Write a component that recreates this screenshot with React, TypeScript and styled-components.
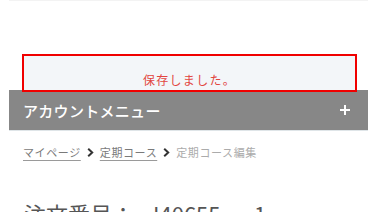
import React from "react";
import styled, { createGlobalStyle } from "styled-components";

const Global = createGlobalStyle`
  html, body { margin: 0; padding: 0; background: #fff; }
  body { font-family: "Noto Sans CJK JP", "Noto Sans", sans-serif; overflow: hidden; }
`;

const Page = styled.div`
  position: relative;
  width: 376px;
  height: 212px;
  overflow: hidden;
`;

const Container = styled.div`
  margin: 0 8px 0 9px;
`;

const HeaderEdge = styled.div`
  height: 1px;
  background: #f3f3f3;
  margin-bottom: 89px;
`;

const MenuBar = styled.div`
  height: 40px;
  background: #878787;
  box-shadow: 0 1px 0 #dfe5e8;
  display: flex;
  align-items: center;
  justify-content: space-between;
  padding: 0 18px 0 14px;
  color: #fff;
`;

const MenuTitle = styled.span`
  font-size: 15px;
  letter-spacing: 0.3px;
  font-weight: 500;
`;

const Plus = styled.svg`
  width: 10px;
  height: 10px;
  display: block;
`;

const Crumbs = styled.nav`
  display: flex;
  align-items: center;
  gap: 6px;
  padding: 14px 0 0 14px;
  font-size: 11px;
  letter-spacing: 0.6px;
  line-height: 16px;
`;

const CrumbLink = styled.a`
  color: #7a7a7a;
  text-decoration: underline;
  text-decoration-color: #9a9a9a;
  text-underline-offset: 3px;
`;

const CrumbCurrent = styled.span`
  color: #ababab;
`;

const Chevron = styled.svg`
  width: 7px;
  height: 9px;
  display: block;
`;

const Title = styled.h1`
  margin: 0;
  padding: 38px 0 0 15px;
  display: flex;
  gap: 19px;
  font-size: 22px;
  font-weight: 400;
  color: #555;
  line-height: 30px;
  white-space: nowrap;
  word-spacing: 8px;
`;

const Toast = styled.div`
  position: absolute;
  left: 22px;
  top: 54px;
  width: 335px;
  height: 38px;
  box-sizing: border-box;
  border: 2px solid #f00000;
  background: #f3f6f9;
  display: flex;
  justify-content: center;
  align-items: flex-end;
  padding-bottom: 1px;
  color: #e2453f;
  font-size: 12px;
  letter-spacing: 1.3px;
  line-height: 18px;
`;

const ChevronIcon = () => (
  <Chevron viewBox="0 0 7 9">
    <path d="M1.2 0.8 L5.2 4.5 L1.2 8.2" fill="none" stroke="#333" strokeWidth="2" />
  </Chevron>
);

export default function App() {
  return (
    <Page>
      <Global />
      <Container>
        <HeaderEdge />
        <MenuBar>
          <MenuTitle>アカウントメニュー</MenuTitle>
          <Plus viewBox="0 0 10 10">
            <path d="M5 0 V10 M0 5 H10" stroke="#fff" strokeWidth="2" />
          </Plus>
        </MenuBar>
        <Crumbs>
          <CrumbLink>マイページ</CrumbLink>
          <ChevronIcon />
          <CrumbLink>定期コース</CrumbLink>
          <ChevronIcon />
          <CrumbCurrent>定期コース編集</CrumbCurrent>
        </Crumbs>
        <Title>
          <span>注文番号：</span>
          <span>I40655 - 1</span>
        </Title>
      </Container>
      <Toast>保存しました。</Toast>
    </Page>
  );
}
